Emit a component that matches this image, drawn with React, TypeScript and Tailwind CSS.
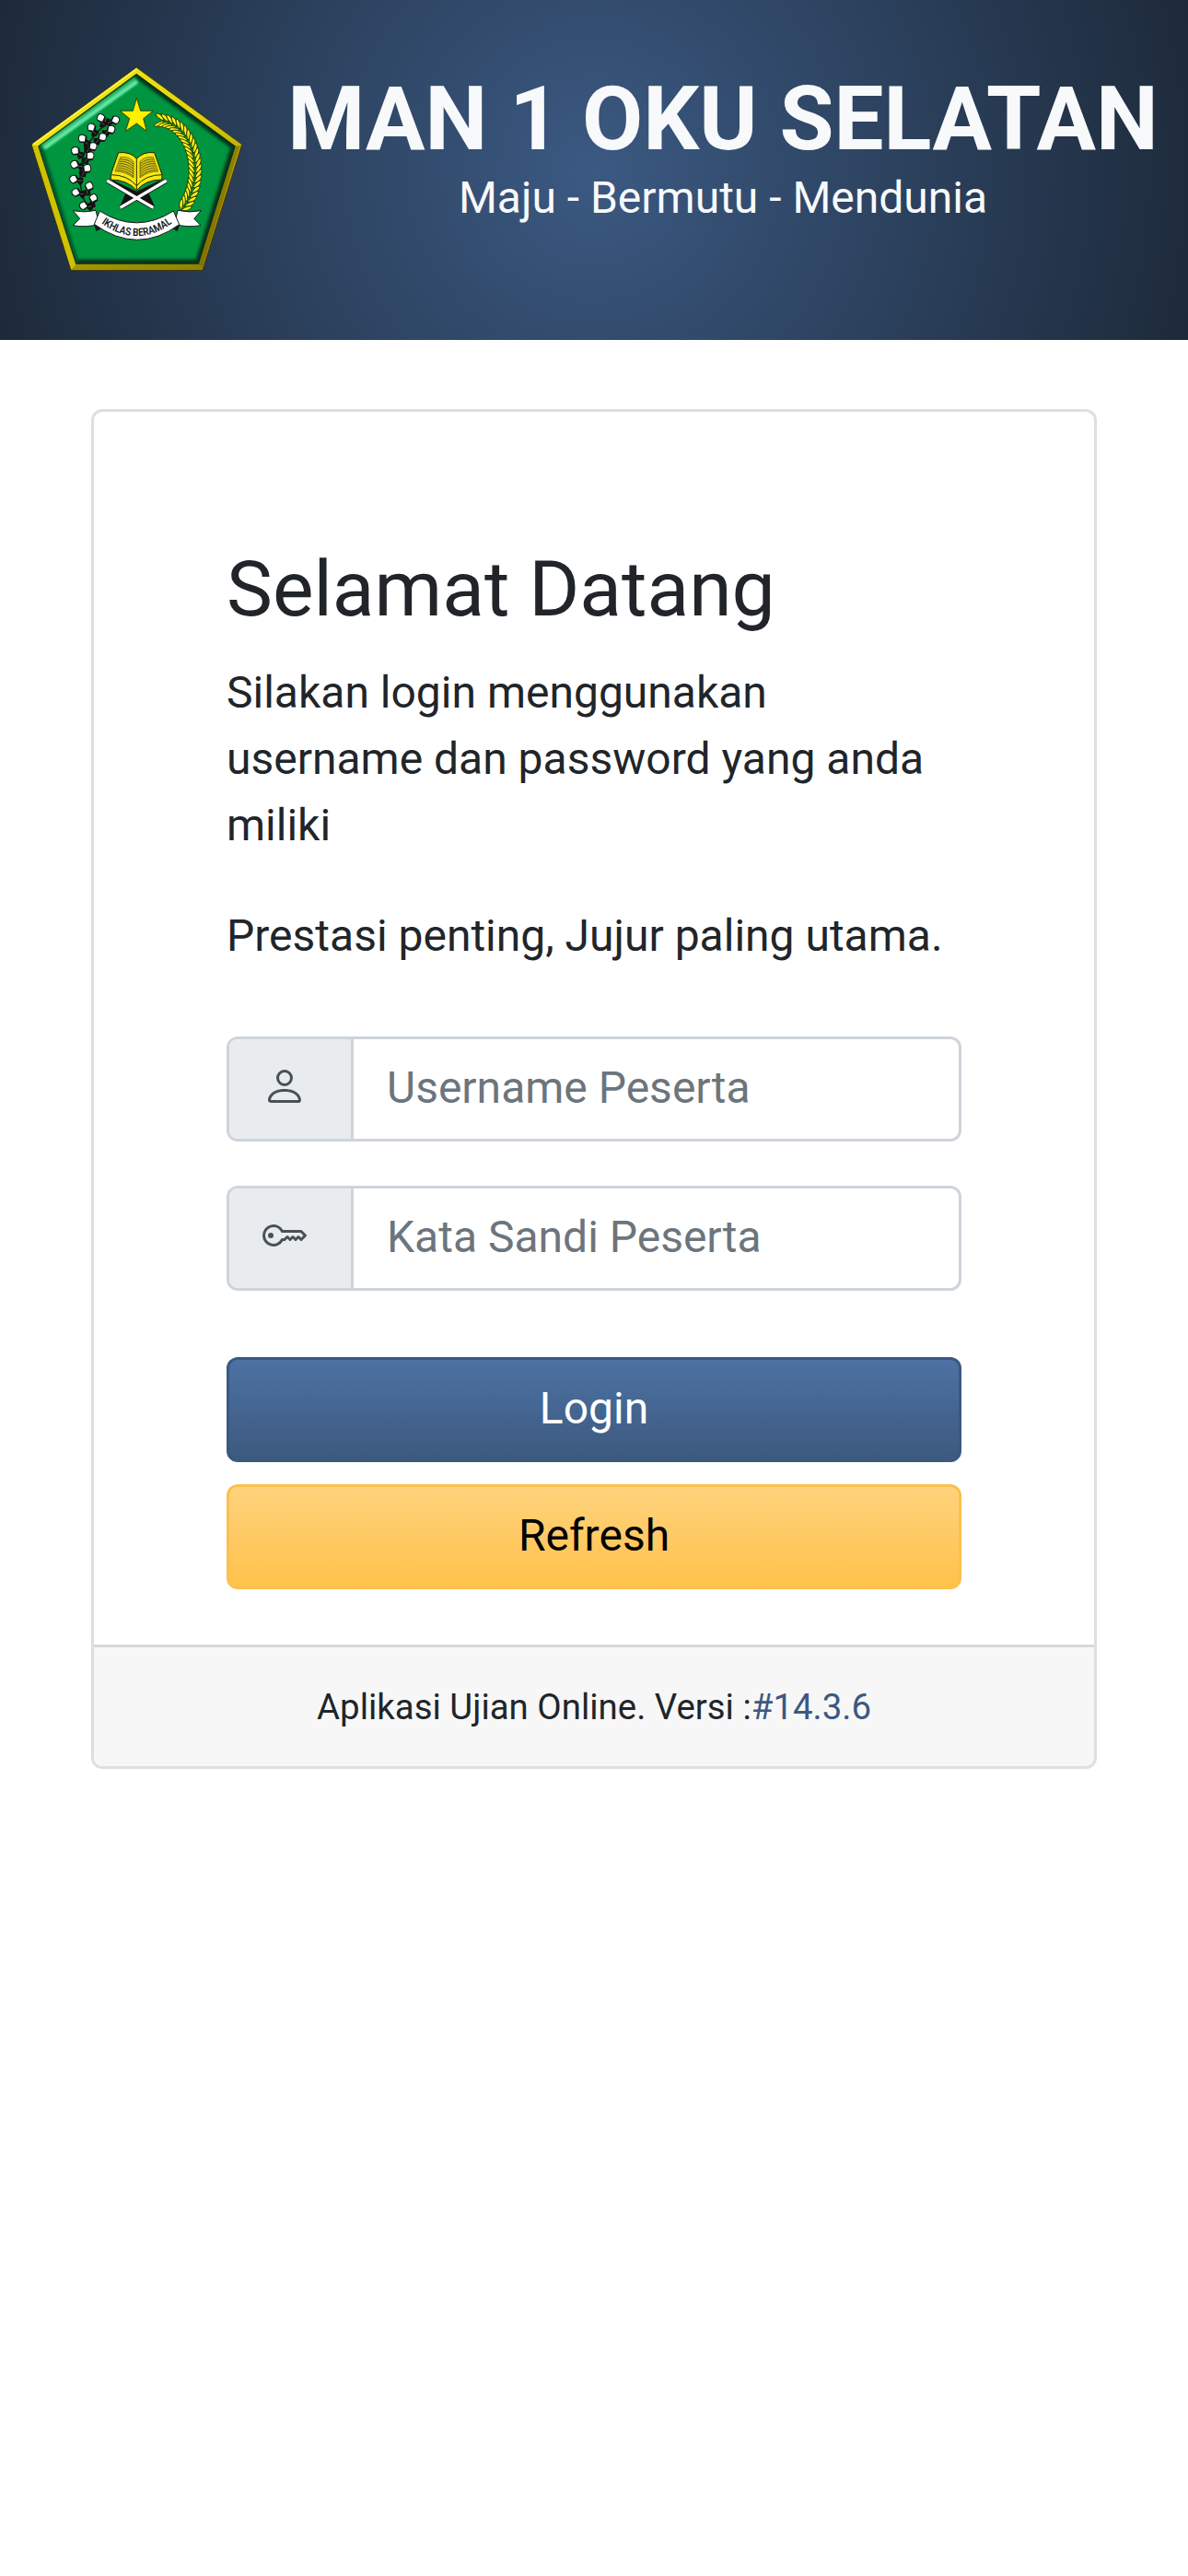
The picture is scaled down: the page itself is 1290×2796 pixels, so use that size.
import { BsKey, BsPerson } from "react-icons/bs";
import type { ReactNode } from "react";

// Cotton bolls on the left branch: x, y, rotation
const bolls: [number, number, number][] = [
  [269, 205, -20], [315, 211, 72], [238, 236, -30], [301, 242, 55], [209, 272, -40],
  [273, 267, 55], [186, 312, -50], [242, 297, 55], [184, 356, -70], [233, 328, 45],
  [181, 404, -75], [223, 369, 40], [188, 447, -75], [230, 427, 20], [244, 466, 15], [213, 490, -80],
];

// Rice grains along the right branch, generated from the stem's curve
const grains = Array.from({ length: 23 }, (_, i) => {
  const t = i / 22;
  const u = 1 - t;
  const x = u * u * u * 462 + 3 * u * u * t * 575 + 3 * u * t * t * 610 + t * t * t * 538;
  const y = u * u * u * 212 + 3 * u * u * t * 225 + 3 * u * t * t * 400 + t * t * t * 494;
  const dx = 3 * u * u * 113 + 6 * u * t * 35 + 3 * t * t * -72;
  const dy = 3 * u * u * 13 + 6 * u * t * 175 + 3 * t * t * 94;
  return { x, y, a: (Math.atan2(dy, dx) * 180) / Math.PI };
});

function Emblem() {
  return (
    <svg viewBox="0 0 780 750" className="h-[250px] w-[260px]" role="img" aria-label="Ikhlas Beramal">
      <defs>
        <linearGradient id="rim" x1="0" y1="0" x2="1" y2="1">
          <stop offset="0" stopColor="#f8ee20" />
          <stop offset="0.5" stopColor="#e2d40c" />
          <stop offset="1" stopColor="#8b7a00" />
        </linearGradient>
        <filter id="soft"><feGaussianBlur stdDeviation="5" /></filter>
        <filter id="gleam"><feGaussianBlur stdDeviation="2.5" /></filter>
        <clipPath id="field"><path d="M385 62 L705 296 L586 678 L188 678 L66 296Z" /></clipPath>
        <path id="motto" d="M262 541 Q385 636 509 541" />
      </defs>
      <path d="M385 40 L728 290 L600 700 L172 700 L43 290Z" fill="url(#rim)" stroke="#383200" strokeWidth="2.5" />
      <path d="M385 44 L48 290" stroke="#fff84a" strokeWidth="5" />
      <path d="M722 294 L705 296 L586 678 L598 694Z" fill="#675b00" opacity=".55" />
      <path d="M172 698 L190 676 L586 676 L600 698Z" fill="#8d7c00" opacity=".65" />
      <path d="M45 292 L66 296 L190 676 L172 698Z" fill="#d0c200" />
      <path d="M385 62 L705 296 L586 678 L188 678 L66 296Z" fill="#00953f" stroke="#102c10" strokeWidth="4" />
      <g clipPath="url(#field)">
        <path d="M385 60 L706 296 L588 678 L188 678" fill="none" stroke="#00351b" strokeWidth="27" filter="url(#soft)" />
        <path d="M68 296 L188 678" fill="none" stroke="#04562c" strokeWidth="20" filter="url(#soft)" />
        <path d="M80 300 L384 82" stroke="#3ac77a" strokeWidth="19" filter="url(#soft)" />
        <path d="M88 300 L384 88" stroke="#70edb0" strokeWidth="9" strokeLinecap="round" filter="url(#gleam)" />
      </g>
      <path d="M385 139 L398 181 L439 181 L407 206 L418 247 L385 222 L349 247 L362 206 L331 181 L373 181Z" fill="#fff000" stroke="#302c00" strokeWidth="2.5" />

      <path d="M290 222 C190 290 185 420 225 495" fill="none" stroke="#0a3018" strokeWidth="5" />
      {bolls.map(([x, y, r], i) => (
        <g key={i} transform={`translate(${x} ${y}) rotate(${r})`}>
          <path d="M-12 3 L-3 12 L-12 24 Q0 34 12 24 L6 12 L14 2Z" fill="#141012" stroke="#141012" strokeWidth="4" strokeLinejoin="round" />
          <path d="M-13 1 Q-13 -8 -5 -13 Q0 -16 5 -13 Q13 -8 13 1 L0 13Z" fill="#fff" stroke="#141012" strokeWidth="3" strokeLinejoin="round" />
          <path d="M-1 14 L3 26" stroke="#8a8a8a" strokeWidth="1.5" />
        </g>
      ))}

      {grains.map((g, i) => (
        <g key={i} transform={`translate(${g.x} ${g.y}) rotate(${g.a})`} fill="#f8ee17" stroke="#1c2c00" strokeWidth="2.5">
          <path d="M12 0 C3 -3 -12 -7 -18 -21 C-5 -23 9 -14 12 0Z" />
          <path d="M12 0 C3 3 -12 7 -18 21 C-5 23 9 14 12 0Z" />
        </g>
      ))}

      <path d="M302 404 L385 443 L467 404 L438 430 L422 443 L445 494 L386 464 L330 494 L350 447 L326 430Z" fill="#151210" />
      <path d="M289 408 L439 496 M482 408 L332 496" stroke="#1a1a1a" strokeWidth="15" />
      <path d="M289 408 L439 496 M482 408 L332 496" stroke="#fff" strokeWidth="10" />
      <path d="M301 389 L326 317 Q365 313 385 337 Q407 313 443 317 L468 389 L467 405 Q414 405 385 440 Q356 406 301 405Z" fill="#f7e813" stroke="#292500" strokeWidth="3" />
      <path d="M301 389 Q355 389 385 425 Q414 389 468 389 M385 337 V438" fill="none" stroke="#292500" strokeWidth="3" />
      <path d="M332 332 Q357 328 375 346 V399 Q347 377 315 378Z M439 332 Q413 328 396 346 V399 Q422 377 455 378Z" fill="#d7ca1a" stroke="#514800" strokeWidth="2" />
      {[0, 1, 2, 3, 4, 5].map((i) => (
        <path
          key={i}
          d={`M${331 - i * 2} ${339 + i * 7} q24 -3 ${44 + i * 2} ${15 + i} M${440 + i * 2} ${339 + i * 7} q-24 -3 ${-44 - i * 2} ${15 + i}`}
          fill="none"
          stroke="#4f4700"
          strokeWidth="2.5"
        />
      ))}

      <path d="M178 506 Q216 514 252 505 L263 550 Q220 562 178 554 L200 532Z M595 506 Q555 514 519 505 L509 550 Q550 562 594 554 L572 532Z" fill="#fff" stroke="#181818" strokeWidth="3" />
      <path d="M246 548 L272 563 L253 573Z M526 548 L500 563 L518 573Z" fill="#151515" />
      <path d="M265 507 Q385 584 505 507 L524 551 Q387 651 247 550Z" fill="#fff" stroke="#181818" strokeWidth="3" />
      <text fill="#181818" fontFamily="Roboto, sans-serif" fontSize="35" fontWeight="600">
        <textPath href="#motto" startOffset="50%" textAnchor="middle" textLength="250" lengthAdjust="spacingAndGlyphs">IKHLAS BERAMAL</textPath>
      </text>
    </svg>
  );
}

function Field({ icon, label, type }: { icon: ReactNode; label: string; type: string }) {
  return (
    <div className="flex h-[114px] overflow-hidden rounded-xl border-3 border-[#ced4da] bg-white">
      <span className="flex w-[135px] shrink-0 border-r-3 border-[#ced4da] bg-[#e9ecef] pt-[27px] pl-9 text-5xl text-[#495057]">
        {icon}
      </span>
      <input
        type={type}
        placeholder={label}
        aria-label={label}
        className="min-w-0 flex-1 px-9 pb-[2px] text-[48px] text-[#495057] outline-none placeholder:text-[#6c757d] placeholder:opacity-100"
      />
    </div>
  );
}

export default function App() {
  return (
    <div className="min-h-[2796px] bg-white font-['Roboto',sans-serif] text-[48px] leading-[72px] text-[#212529]">
      <header className="flex h-[369px] bg-[radial-gradient(circle,#3b5982_0%,#1d2a3a_100%)]">
        <div className="w-[280px] shrink-0 pt-[60px] pl-5">
          <Emblem />
        </div>
        <div className="flex-1 pt-[72px] text-center whitespace-nowrap">
          <h1 className="text-[96px] leading-[115px] font-bold text-[#f8f9fa]">MAN 1 OKU SELATAN</h1>
          <p className="-mt-[8px] text-[#f8f9fa]">Maju - Bermutu - Mendunia</p>
        </div>
      </header>

      <main className="mx-[99px] mt-[75px] overflow-hidden rounded-xl border-3 border-[#dfdfdf]">
        <div className="px-36 pt-[142px] pb-[60px]">
          <h2 className="mb-[26px] text-[84px] leading-[101px]">Selamat Datang</h2>
          <p className="mb-12">Silakan login menggunakan username dan password yang anda miliki</p>
          <p>Prestasi penting, Jujur paling utama.</p>
          <form className="mt-[73px]" onSubmit={(e) => e.preventDefault()}>
            <Field icon={<BsPerson />} label="Username Peserta" type="text" />
            <div className="h-12" />
            <Field icon={<BsKey />} label="Kata Sandi Peserta" type="password" />
            <button className="mt-[72px] block h-[114px] w-full rounded-xl border-3 border-[#3b5980] bg-linear-to-b from-[#4c72a3] to-[#3d597f] pb-[2px] text-white">
              Login
            </button>
            <button className="mt-6 block h-[114px] w-full rounded-xl border-3 border-[#fcc04f] bg-linear-to-b from-[#ffd37c] to-[#ffc149] pb-[2px] text-black">
              Refresh
            </button>
          </form>
        </div>
        <footer className="h-[132px] border-t-3 border-[#d8d8d8] bg-[#f7f7f7] pt-[29px] text-center text-[38.4px]">
          Aplikasi Ujian Online. Versi :<a className="text-[#3b5982]">#14.3.6</a>
        </footer>
      </main>
    </div>
  );
}
